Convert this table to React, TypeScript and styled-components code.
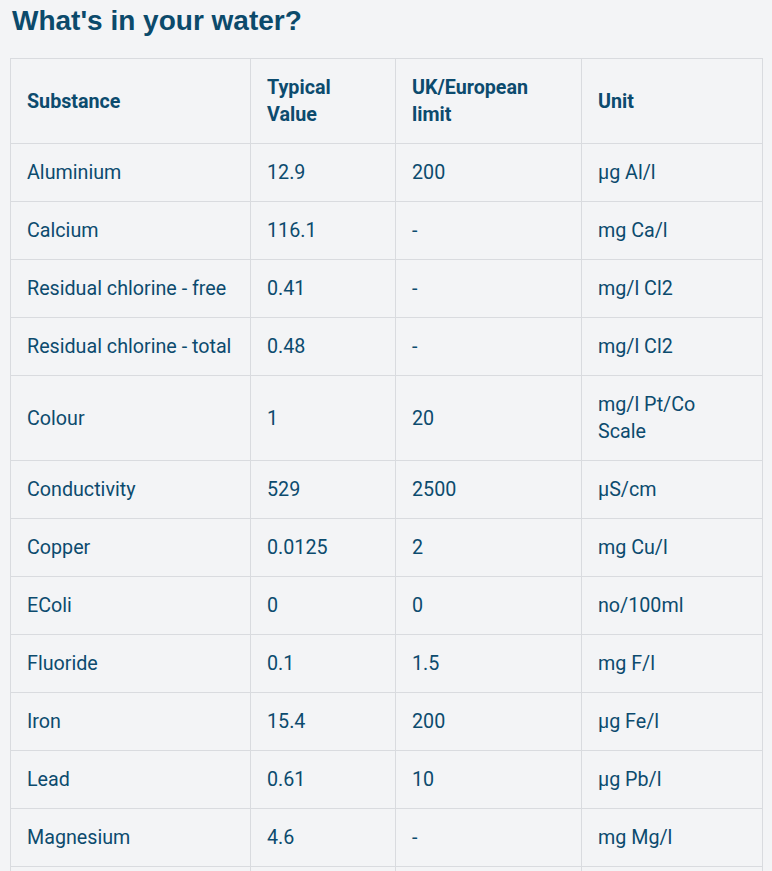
import React from "react";
import styled, { createGlobalStyle } from "styled-components";

const Global = createGlobalStyle`
  html, body { margin: 0; padding: 0; background: #f3f4f6; }
  body { font-family: Roboto, "Liberation Sans", sans-serif; color: #0c4b6e; }
  *, *::before, *::after { box-sizing: border-box; }
`;

const Page = styled.div`
  padding: 0 10px;
`;

const Title = styled.h2`
  font-family: "Liberation Sans", Arial, sans-serif;
  font-weight: 700;
  font-size: 28px;
  line-height: 32px;
  margin: 5px 0 21px 2px;
  color: #0b4a6b;
`;

const Table = styled.table`
  width: 752px;
  border-collapse: collapse;
  table-layout: fixed;
  color: #0c4b6e;
`;

const Th = styled.th<{ $w: number }>`
  width: ${(p) => p.$w}px;
  text-align: left;
  font-weight: 700;
  font-size: 19.7px;
  line-height: 27px;
  padding: 15px 16px;
  border: 1px solid #d9dbdf;
  vertical-align: middle;
`;

const Td = styled.td`
  font-size: 19.7px;
  line-height: 27px;
  padding: 15px 16px;
  border: 1px solid #d9dbdf;
  vertical-align: middle;
`;

const rows: [string, string, string, string][] = [
  ["Aluminium", "12.9", "200", "µg Al/l"],
  ["Calcium", "116.1", "-", "mg Ca/l"],
  ["Residual chlorine - free", "0.41", "-", "mg/l Cl2"],
  ["Residual chlorine - total", "0.48", "-", "mg/l Cl2"],
  ["Colour", "1", "20", "mg/l Pt/Co Scale"],
  ["Conductivity", "529", "2500", "µS/cm"],
  ["Copper", "0.0125", "2", "mg Cu/l"],
  ["EColi", "0", "0", "no/100ml"],
  ["Fluoride", "0.1", "1.5", "mg F/l"],
  ["Iron", "15.4", "200", "µg Fe/l"],
  ["Lead", "0.61", "10", "µg Pb/l"],
  ["Magnesium", "4.6", "-", "mg Mg/l"],
  ["Manganese", "1.2", "50", "µg Mn/l"],
];

export default function App() {
  return (
    <Page>
      <Global />
      <Title>What's in your water?</Title>
      <Table>
        <thead>
          <tr>
            <Th $w={240}>Substance</Th>
            <Th $w={145}>Typical Value</Th>
            <Th $w={186}>UK/European limit</Th>
            <Th $w={181}>Unit</Th>
          </tr>
        </thead>
        <tbody>
          {rows.map((r) => (
            <tr key={r[0]}>
              {r.map((c, i) => (
                <Td key={i}>{c}</Td>
              ))}
            </tr>
          ))}
        </tbody>
      </Table>
    </Page>
  );
}
